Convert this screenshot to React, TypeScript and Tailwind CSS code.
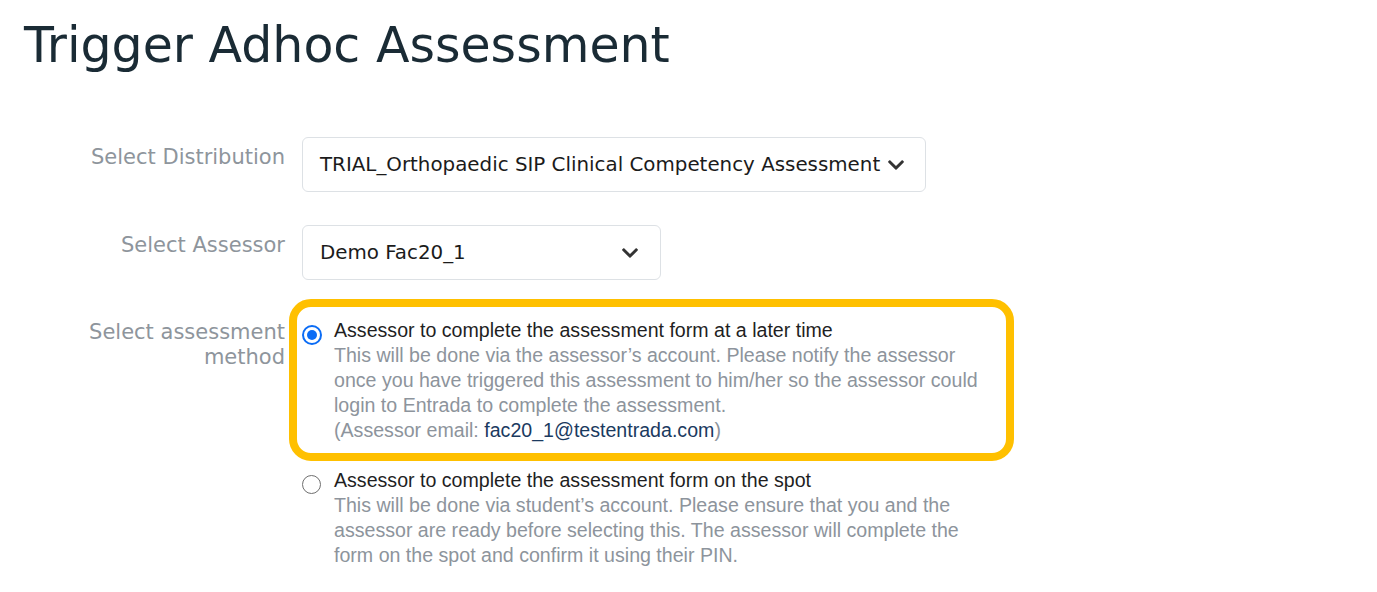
import React from "react";

const verdana = { fontFamily: '"DejaVu Sans", Verdana, sans-serif' };
const arial = { fontFamily: '"Liberation Sans", Arial, sans-serif' };

function Chevron() {
  return (
    <svg viewBox="5 118 438 276" className="h-[10px] w-[16px] shrink-0 text-[#333]" fill="currentColor">
      <path d="M207.029 381.476L12.686 187.132c-9.373-9.373-9.373-24.569 0-33.941l22.667-22.667c9.357-9.357 24.522-9.375 33.901-.04L224 284.505l154.745-154.021c9.379-9.335 24.544-9.317 33.901.04l22.667 22.667c9.373 9.373 9.373 24.569 0 33.941L240.971 381.476c-9.373 9.372-24.569 9.372-33.942 0z" />
    </svg>
  );
}

function Radio({ checked }: { checked: boolean }) {
  return checked ? (
    <span className="mt-[7px] flex h-[20px] w-[20px] shrink-0 items-center justify-center rounded-full border-2 border-[#0b6cf5] bg-white">
      <span className="h-[10px] w-[10px] rounded-full bg-[#0b6cf5]" />
    </span>
  ) : (
    <span className="mt-[7px] h-[19px] w-[19px] shrink-0 rounded-full border border-[#6f6f6f] bg-white" />
  );
}

export default function App() {
  return (
    <div className="min-h-[592px] w-full bg-white">
      <h1
        className="pl-[24px] pt-[17px] text-[49px] leading-[58px] text-[#1a2b35]"
        style={verdana}
      >
        Trigger Adhoc Assessment
      </h1>

      <div className="mt-[62px] grid grid-cols-[285px_1fr] gap-x-[17px]">
        <div className="pt-2 text-right text-[21px] leading-6 text-[#8e959c]" style={verdana}>
          Select Distribution
        </div>
        <div>
          <div
            className="inline-flex items-center gap-2 rounded-md border border-[#dde1e5] bg-white py-[14px] pl-[17px] pr-[21px] text-[19.85px] leading-[25px] text-[#1b1b1b]"
            style={verdana}
          >
            <span>TRIAL_Orthopaedic SIP Clinical Competency Assessment</span>
            <Chevron />
          </div>
        </div>

        <div className="mt-[33px] pt-2 text-right text-[21px] leading-6 text-[#8e959c]" style={verdana}>
          Select Assessor
        </div>
        <div className="mt-[33px]">
          <div
            className="flex w-[359px] items-center justify-between rounded-md border border-[#dde1e5] bg-white py-[14px] pl-[17px] pr-[22px] text-[19.85px] leading-[25px] text-[#1b1b1b]"
            style={verdana}
          >
            <span>Demo Fac20_1</span>
            <Chevron />
          </div>
        </div>

        <div
          className="mt-[38px] pt-[2px] text-right text-[21px] leading-[25px] text-[#8e959c]"
          style={verdana}
        >
          Select assessment
          <br />
          method
        </div>
        <div className="mt-[38px] flex flex-col gap-[25px]" style={arial}>
          <div className="relative flex gap-[13px]">
            <div className="pointer-events-none absolute left-[-13px] top-[-19px] h-[162px] w-[725px] rounded-[22px] border-[8px] border-[#ffc000]" />
            <Radio checked />
            <div className="-ml-[1px] text-[19.6px] leading-[25px]">
              <div className="text-[#1f1f1f]">Assessor to complete the assessment form at a later time</div>
              <div className="text-[#8d949c]">
                This will be done via the assessor’s account. Please notify the assessor
                <br />
                once you have triggered this assessment to him/her so the assessor could
                <br />
                login to Entrada to complete the assessment.
                <br />
                (Assessor email: <span className="text-[#1b3a5f]">fac20_1@testentrada.com</span>)
              </div>
            </div>
          </div>
          <div className="flex gap-[13px]">
            <Radio checked={false} />
            <div className="text-[19.6px] leading-[25px]">
              <div className="text-[#1f1f1f]">Assessor to complete the assessment form on the spot</div>
              <div className="text-[#8d949c]">
                This will be done via student’s account. Please ensure that you and the
                <br />
                assessor are ready before selecting this. The assessor will complete the
                <br />
                form on the spot and confirm it using their PIN.
              </div>
            </div>
          </div>
        </div>
      </div>
    </div>
  );
}
